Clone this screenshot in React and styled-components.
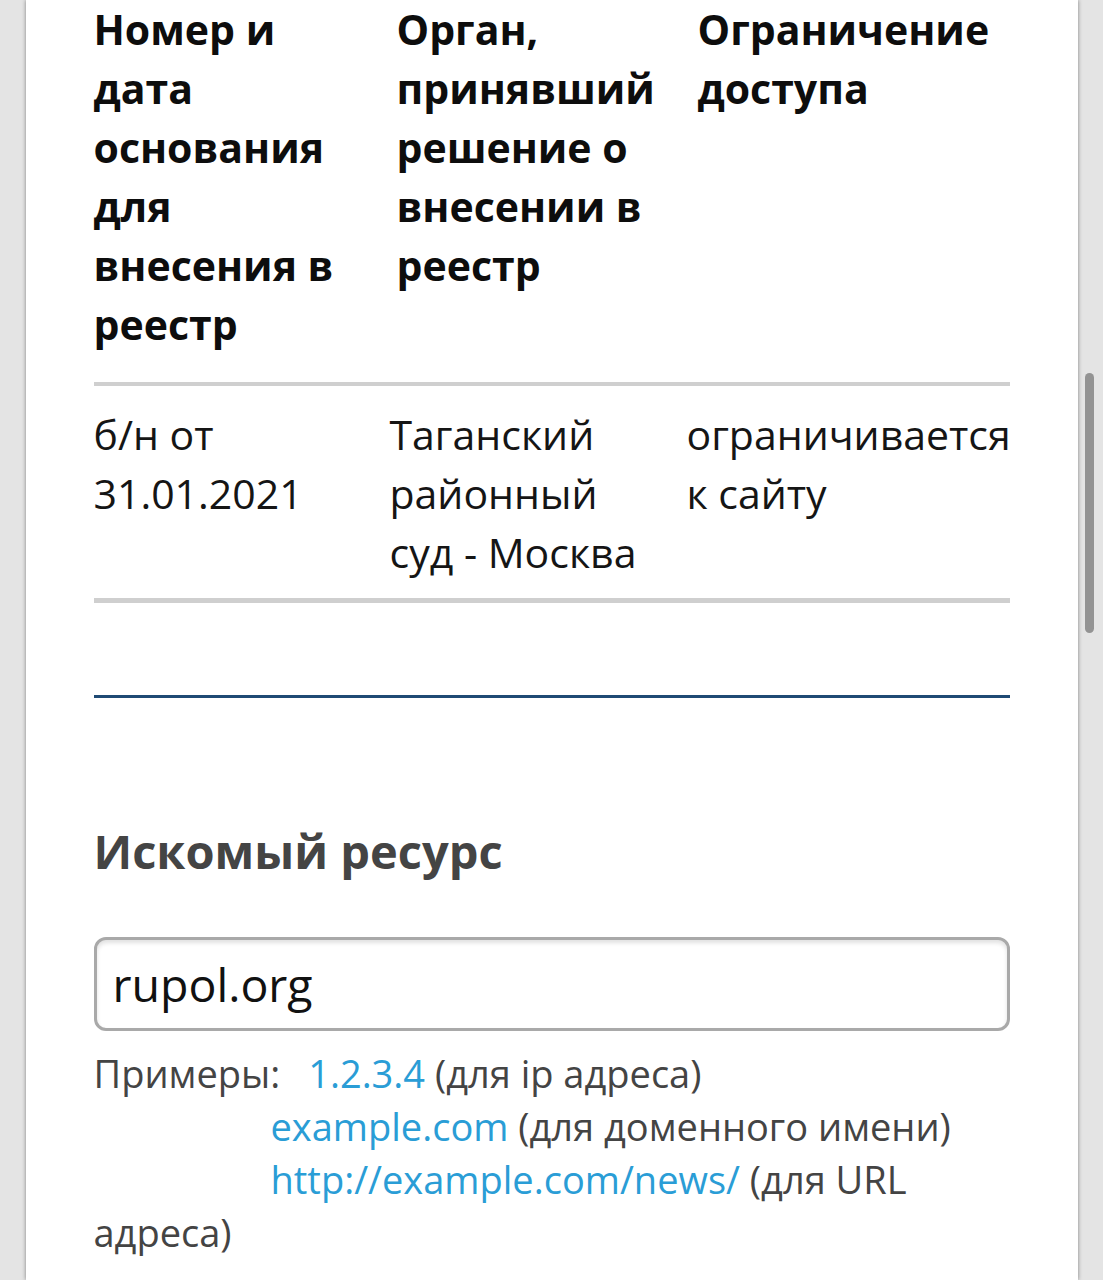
import React from 'react';
import styled, { createGlobalStyle } from 'styled-components';

const GlobalStyle = createGlobalStyle`
  html, body {
    margin: 0;
    padding: 0;
    background: #e4e4e4;
  }
  body {
    font-family: "Open Sans", "Liberation Sans", sans-serif;
  }
`;

const Page = styled.div`
  min-height: 100vh;
  background: #e4e4e4;
  display: flex;
  justify-content: center;
`;

const Card = styled.div`
  width: 1052px;
  min-height: 1280px;
  box-sizing: border-box;
  background: #fff;
  padding: 0 68px;
  box-shadow: 0 0 4px rgba(0, 0, 0, 0.45);
`;

const Row = styled.div`
  display: grid;
  grid-template-columns: ${(p) => p.$cols};
  border-bottom: ${(p) => p.$line}px solid #cfcfcf;
  padding: ${(p) => p.$pad};
`;

const HeadCell = styled.div`
  font-size: 41px;
  line-height: 59px;
  font-weight: 700;
  color: #0d0d0d;
  padding-right: ${(p) => p.$pr || 0}px;
`;

const Cell = styled.div`
  font-size: 41px;
  line-height: 59px;
  font-weight: 400;
  color: #151515;
  padding-right: ${(p) => p.$pr || 0}px;
`;

const Divider = styled.div`
  height: 3px;
  background: #1f4a74;
  margin-top: 92px;
`;

const Heading = styled.h2`
  margin: 125px 0 0;
  font-size: 47px;
  line-height: 56px;
  font-weight: 700;
  color: #444;
`;

const Input = styled.input`
  display: block;
  width: 100%;
  height: 94px;
  box-sizing: border-box;
  margin-top: 58px;
  padding: 0 16px;
  border: 3px solid #a9a9a9;
  border-radius: 12px;
  box-shadow: inset 0 3px 4px rgba(0, 0, 0, 0.12);
  font-family: "Open Sans", "Liberation Sans", sans-serif;
  font-size: 46.5px;
  color: #111;
  background: #fff;
  outline: none;
`;

const Examples = styled.p`
  margin: 16px 0 0;
  font-size: 38px;
  line-height: 53px;
  color: #444;
`;

const Spacer = styled.span`
  display: inline-block;
  width: ${(p) => p.$w}px;
`;

const Link = styled.a`
  color: #2a9dd6;
  text-decoration: none;
`;

const Scrollbar = styled.div`
  position: fixed;
  left: 1085px;
  top: 373px;
  width: 9px;
  height: 260px;
  border-radius: 5px;
  background: #939393;
`;

export default function App() {
  return (
    <>
      <GlobalStyle />
      <Page>
        <Card>
          <Row $cols="303px 301px 1fr" $pad="0 0 28px" $line={4}>
            <HeadCell $pr={40}>Номер и дата основания для внесения в реестр</HeadCell>
            <HeadCell $pr={30}>Орган, принявший решение о внесении в реестр</HeadCell>
            <HeadCell>Ограничение доступа</HeadCell>
          </Row>
          <Row $cols="296px 297px 1fr" $pad="19px 0 16px" $line={5}>
            <Cell $pr={30}>б/н от 31.01.2021</Cell>
            <Cell $pr={30}>Таганский районный суд - Москва</Cell>
            <Cell>ограничивается к сайту</Cell>
          </Row>
          <Divider />
          <Heading>Искомый ресурс</Heading>
          <Input readOnly value="rupol.org" />
          <Examples>
            Примеры:<Spacer $w={28} />
            <Link href="#">1.2.3.4</Link> (для ip адреса)
            <br />
            <Spacer $w={177} />
            <Link href="#">example.com</Link> (для доменного имени)
            <br />
            <Spacer $w={177} />
            <Link href="#">http://example.com/news/</Link> (для URL адреса)
          </Examples>
        </Card>
        <Scrollbar />
      </Page>
    </>
  );
}
